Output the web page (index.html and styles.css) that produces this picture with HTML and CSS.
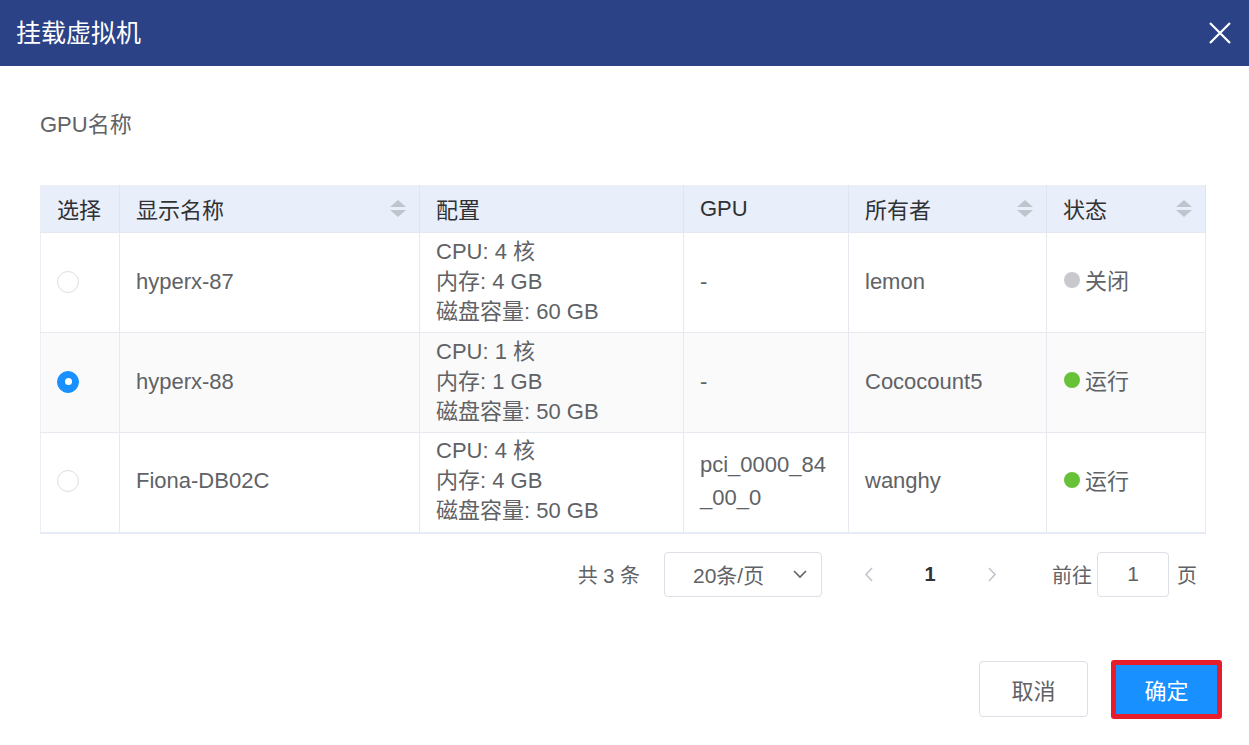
FILE: index.html
```html
<!DOCTYPE html>
<html lang="zh-CN">
<head>
<meta charset="utf-8">
<title>挂载虚拟机</title>
<link rel="stylesheet" href="styles.css">
</head>
<body>
<div class="dialog">
  <div class="dialog-header">
    <span class="dialog-title">挂载虚拟机</span>
    <svg class="close" width="22" height="22" viewBox="0 0 22 22"><path d="M1 1L21 21M21 1L1 21" stroke="#fff" stroke-width="2.2" fill="none"/></svg>
  </div>
  <div class="dialog-body">
    <div class="field-label">GPU名称</div>
    <table class="grid">
      <colgroup>
        <col style="width:79px"><col style="width:300px"><col style="width:264px"><col style="width:165px"><col style="width:198px"><col style="width:159px">
      </colgroup>
      <thead>
        <tr>
          <th><div class="th-inner">选择</div></th>
          <th><div class="th-inner">显示名称<span class="sort"><svg width="16" height="17" viewBox="0 0 16 17"><path d="M8 0L16 7H0Z M0 10H16L8 17Z" fill="#c0c4cc"/></svg></span></div></th>
          <th><div class="th-inner">配置</div></th>
          <th><div class="th-inner gpu-head">GPU</div></th>
          <th><div class="th-inner">所有者<span class="sort"><svg width="16" height="17" viewBox="0 0 16 17"><path d="M8 0L16 7H0Z M0 10H16L8 17Z" fill="#c0c4cc"/></svg></span></div></th>
          <th class="fixed"><div class="th-inner">状态<span class="sort"><svg width="16" height="17" viewBox="0 0 16 17"><path d="M8 0L16 7H0Z M0 10H16L8 17Z" fill="#c0c4cc"/></svg></span></div></th>
        </tr>
      </thead>
      <tbody>
        <tr>
          <td><span class="radio"></span></td>
          <td>hyperx-87</td>
          <td class="cfg"><div>CPU: 4 核</div><div>内存: 4 GB</div><div>磁盘容量: 60 GB</div></td>
          <td class="gpu">-</td>
          <td>lemon</td>
          <td class="fixed"><div class="status"><span class="dot off"></span>关闭</div></td>
        </tr>
        <tr class="alt">
          <td><span class="radio checked"></span></td>
          <td>hyperx-88</td>
          <td class="cfg"><div>CPU: 1 核</div><div>内存: 1 GB</div><div>磁盘容量: 50 GB</div></td>
          <td class="gpu">-</td>
          <td>Cococount5</td>
          <td class="fixed"><div class="status"><span class="dot on"></span>运行</div></td>
        </tr>
        <tr>
          <td><span class="radio"></span></td>
          <td>Fiona-DB02C</td>
          <td class="cfg"><div>CPU: 4 核</div><div>内存: 4 GB</div><div>磁盘容量: 50 GB</div></td>
          <td class="gpu">pci_0000_84<wbr>_00_0</td>
          <td>wanghy</td>
          <td class="fixed"><div class="status"><span class="dot on"></span>运行</div></td>
        </tr>
      </tbody>
    </table>
    <div class="pager">
      <span class="total">共 3 条</span>
      <div class="sizes"><span>20条/页</span><svg width="14" height="9" viewBox="0 0 14 9"><path d="M1 1L7 7L13 1" stroke="#606266" stroke-width="1.6" fill="none"/></svg></div>
      <span class="pbtn"><svg width="9" height="15" viewBox="0 0 9 15"><path d="M8 1L2 7.5L8 14" stroke="#c0c4cc" stroke-width="1.6" fill="none"/></svg></span>
      <span class="pnum">1</span>
      <span class="pbtn"><svg width="9" height="15" viewBox="0 0 9 15"><path d="M1 1L7 7.5L1 14" stroke="#c0c4cc" stroke-width="1.6" fill="none"/></svg></span>
      <span class="jump">前往</span>
      <span class="jump-input">1</span>
      <span class="jump-suffix">页</span>
    </div>
  </div>
  <div class="dialog-footer">
    <button class="btn cancel">取消</button>
    <button class="btn primary">确定</button>
  </div>
</div>
</body>
</html>
```
FILE: styles.css
```css
* { box-sizing: border-box; }
html, body { margin: 0; padding: 0; background: #fff; }
body {
  font-family: "Liberation Sans", "Noto Sans CJK SC", sans-serif;
  color: #606266;
  width: 1249px;
  height: 745px;
  overflow: hidden;
}
.dialog-header {
  height: 66px;
  background: #2b4386;
  display: flex;
  align-items: center;
  justify-content: space-between;
  padding: 0 18px 0 16px;
}
.dialog-title {
  color: #fff;
  font-size: 25px;
  line-height: 30px;
}
.close { display: block; }
.dialog-body { padding: 0 44px 0 40px; }
.field-label {
  font-size: 22px;
  line-height: 28px;
  padding-top: 45px;
  margin-bottom: 46px;
  color: #606266;
}
.grid {
  width: 1165px;
  border-collapse: collapse;
  table-layout: fixed;
  font-size: 22px;
  border-top: 1px solid #ebeef5;
  border-left: 1px solid #ebeef5;
  border-bottom: 2px solid #e6ebf5;
}
.grid th {
  height: 47px;
  background: #e9eefb;
  color: #303133;
  font-weight: normal;
  text-align: left;
  padding: 0 13px 3px 16px;
  border-right: 1px solid #dfe4f0;
  border-bottom: 1px solid #e4e8f0;
}
.th-inner { display: flex; align-items: center; justify-content: space-between; height: 28px; }
.gpu-head { padding-top: 2px; }
.sort { display: flex; margin-top: 2px; }
.grid td {
  height: 100px;
  padding: 0 16px 2px;
  border-right: 1px solid #e6e9ef;
  border-bottom: 1px solid #e6e9ef;
  vertical-align: middle;
}
.grid td.fixed { padding-bottom: 7px; }
.grid th:first-child, .grid td:first-child { padding-left: 16px; }
.grid tr.alt td { background: #fafafa; }
.cfg { line-height: 30px; }
.gpu { line-height: 33px; }
.status { display: flex; align-items: center; height: 28px; }
.radio {
  display: block;
  width: 22px;
  height: 22px;
  border-radius: 50%;
  border: 1px solid #dcdfe6;
  background: #fff;
  position: relative;
}
.radio.checked { background: #1890ff; border-color: #1890ff; }
.radio.checked::after {
  content: "";
  position: absolute;
  left: 6.5px; top: 6.5px;
  width: 7px; height: 7px;
  border-radius: 50%;
  background: #fff;
}
.dot {
  display: block;
  width: 16px;
  height: 16px;
  border-radius: 50%;
  margin-right: 5px;
  margin-left: 1px;
  margin-top: 2px;
}
.dot.off { background: #c8c9cc; }
.dot.on { background: #67c23a; }
.pager {
  display: flex;
  justify-content: flex-end;
  align-items: center;
  height: 45px;
  margin-top: 18px;
  padding-right: 8px;
  font-size: 20px;
  color: #606266;
}
.total { margin-right: 24px; }
.sizes {
  width: 158px;
  height: 45px;
  border: 1px solid #dcdfe6;
  border-radius: 4px;
  display: flex;
  align-items: center;
  justify-content: space-between;
  padding: 0 14px 0 28px;
  margin-right: 23px;
  font-size: 21px;
}
.pbtn {
  width: 46px;
  display: flex;
  justify-content: center;
  align-items: center;
}
.pnum {
  width: 46px;
  margin: 0 16px;
  text-align: center;
  font-weight: bold;
  color: #303133;
}
.jump { margin-left: 37px; margin-right: 5px; }
.jump-input {
  width: 72px;
  height: 45px;
  border: 1px solid #dcdfe6;
  border-radius: 4px;
  display: flex;
  align-items: center;
  justify-content: center;
  margin-right: 8px;
  font-size: 21px;
}
.dialog-footer {
  display: flex;
  justify-content: flex-end;
  align-items: center;
  padding-right: 27px;
  margin-top: 63px;
}
.btn {
  font-family: "Liberation Sans", "Noto Sans CJK SC", sans-serif;
  font-size: 22px;
  border-radius: 4px;
  cursor: pointer;
}
.cancel {
  width: 109px;
  height: 56px;
  border: 1px solid #dcdfe6;
  background: #fff;
  color: #606266;
  margin-right: 23px;
}
.primary {
  width: 111px;
  height: 59px;
  border: 5px solid #e61e2b;
  background: #1890ff;
  color: #fff;
  border-radius: 3px;
}
```
